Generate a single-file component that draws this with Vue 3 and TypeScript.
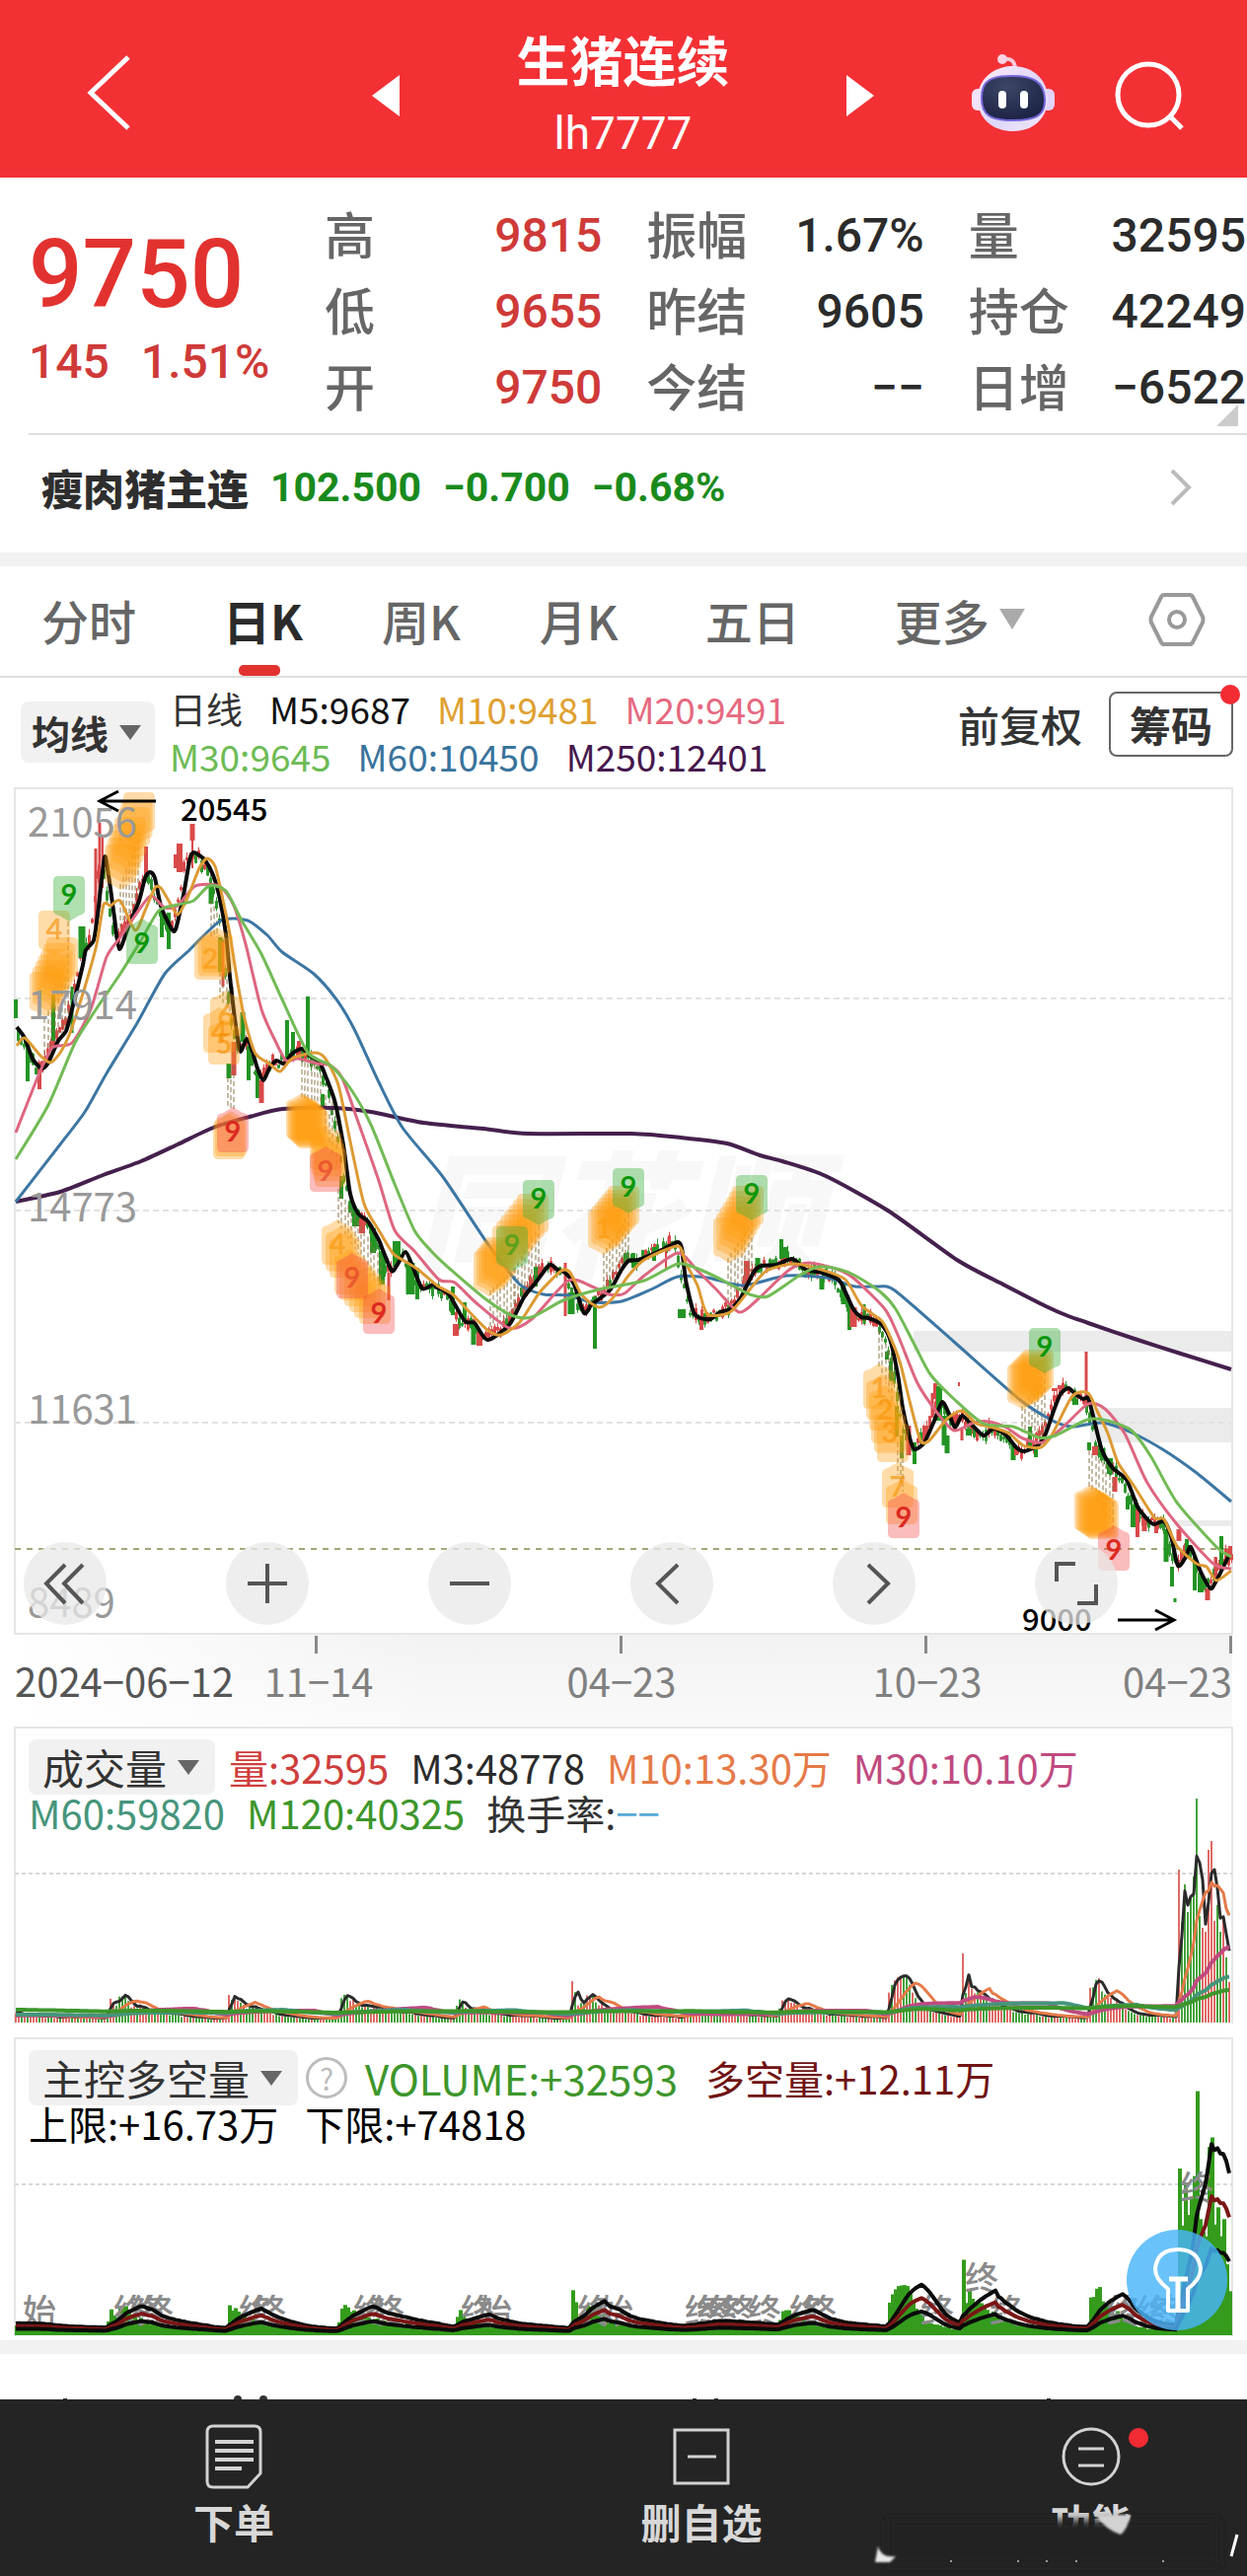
<script setup lang="ts">
import { ref } from 'vue'

type Pt = [number, number]

const quoteColumns = [
  [
    { label: '高', value: '9815', up: true },
    { label: '低', value: '9655', up: true },
    { label: '开', value: '9750', up: true },
  ],
  [
    { label: '振幅', value: '1.67%', up: false },
    { label: '昨结', value: '9605', up: false },
    { label: '今结', value: '−−', up: false },
  ],
  [
    { label: '量', value: '32595', up: false },
    { label: '持仓', value: '42249', up: false },
    { label: '日增', value: '−6522', up: false },
  ],
]

const tabs = ['分时', '日K', '周K', '月K', '五日', '更多']
const activeTab = ref('日K')

const maLegend = [
  [
    { text: '日线', color: '#333333' },
    { text: 'M5:9687', color: '#111111' },
    { text: 'M10:9481', color: '#e0a030' },
    { text: 'M20:9491', color: '#e5697f' },
  ],
  [
    { text: 'M30:9645', color: '#6dbb55' },
    { text: 'M60:10450', color: '#39739c' },
    { text: 'M250:12401', color: '#45184d' },
  ],
]

const volLegend = [
  [
    { text: '量:32595', color: '#cf3e3c' },
    { text: 'M3:48778', color: '#2b2b2b' },
    { text: 'M10:13.30万', color: '#e57a48' },
    { text: 'M30:10.10万', color: '#c04a80' },
  ],
  [
    { text: 'M60:59820', color: '#45957c' },
    { text: 'M120:40325', color: '#3d962b' },
  ],
]

// Smooth path through a list of points
function curve(nums: number[]): string {
  const p: Pt[] = []
  for (let i = 0; i < nums.length; i += 2) p.push([nums[i], nums[i + 1]])
  let d = `M${p[0][0]} ${p[0][1]}`
  for (let i = 0; i < p.length - 1; i++) {
    const a = p[Math.max(i - 1, 0)]
    const b = p[i]
    const c = p[i + 1]
    const e = p[Math.min(i + 2, p.length - 1)]
    const k = 0.12
    d += `C${(b[0] + (c[0] - a[0]) * k).toFixed(1)} ${(b[1] + (c[1] - a[1]) * k).toFixed(1)} ${(c[0] - (e[0] - b[0]) * k).toFixed(1)} ${(c[1] - (e[1] - b[1]) * k).toFixed(1)} ${c[0]} ${c[1]}`
  }
  return d
}

function at(nums: number[], x: number): number {
  if (x <= nums[0]) return nums[1]
  for (let i = 0; i < nums.length - 2; i += 2) {
    if (x <= nums[i + 2]) {
      const t = (x - nums[i]) / (nums[i + 2] - nums[i])
      return nums[i + 1] + (nums[i + 3] - nums[i + 1]) * t
    }
  }
  return nums[nums.length - 1]
}

function noise(i: number): number {
  const s = Math.sin(i * 12.9898 + 4.1) * 43758.5453
  return s - Math.floor(s)
}

const ma5 = [17,1041,25,1052,33,1073,42,1083,49,1077,59,1055,67,1045,73,1023,78,1003,84,978,87,963,95,953,99,927,106,869,110,887,116,930,121,962,131,937,141,913,147,890,152,884,157,890,163,918,173,940,178,942,186,907,192,873,196,864,202,867,208,872,216,887,222,907,229,947,233,990,238,1033,241,1053,244,1066,250,1053,255,1063,261,1083,267,1095,273,1083,280,1075,288,1078,296,1068,306,1063,314,1070,324,1077,331,1093,339,1115,343,1133,349,1167,355,1210,363,1230,373,1238,384,1257,388,1267,397,1288,402,1283,411,1269,418,1283,428,1306,439,1302,443,1305,455,1312,471,1339,481,1341,494,1358,516,1343,531,1315,543,1300,557,1282,565,1287,573,1290,582,1302,592,1331,600,1322,618,1308,630,1287,637,1278,647,1277,660,1272,673,1266,687,1259,691,1265,695,1297,703,1330,710,1336,720,1337,730,1330,740,1327,750,1317,757,1303,765,1288,772,1283,787,1282,803,1276,817,1287,833,1290,850,1297,858,1312,865,1327,873,1335,880,1336,893,1342,902,1357,910,1393,915,1427,922,1457,927,1469,937,1462,947,1440,955,1421,962,1433,968,1447,975,1435,983,1442,997,1455,1007,1448,1020,1455,1030,1467,1038,1471,1052,1465,1060,1453,1068,1430,1075,1413,1083,1407,1090,1413,1098,1418,1103,1417,1108,1435,1117,1470,1128,1488,1142,1500,1153,1527,1163,1540,1170,1545,1180,1542,1187,1557,1194,1587,1202,1578,1207,1568,1217,1593,1227,1610,1233,1602,1245,1578]
const ma10 = [17,1060,25,1052,41,1070,51,1077,61,1067,71,1047,80,1020,90,987,98,957,105,917,112,918,122,913,137,943,147,923,157,900,163,900,171,913,180,927,190,910,202,880,210,870,218,878,224,903,233,947,241,997,249,1037,259,1068,273,1078,284,1086,296,1073,318,1067,329,1072,343,1100,355,1157,369,1220,384,1247,398,1270,408,1277,424,1287,443,1303,459,1312,476,1330,494,1348,508,1353,527,1340,547,1310,569,1288,578,1290,590,1313,607,1325,620,1317,637,1293,653,1277,687,1263,695,1280,707,1303,717,1332,740,1330,760,1307,777,1288,805,1281,833,1287,857,1297,873,1323,893,1338,900,1350,912,1380,922,1420,933,1460,942,1460,960,1438,975,1430,990,1443,1007,1447,1023,1453,1037,1465,1055,1467,1067,1453,1087,1415,1103,1412,1112,1430,1123,1453,1133,1482,1150,1507,1170,1538,1180,1540,1193,1567,1213,1585,1223,1588,1233,1602,1248,1592]
const ma20 = [16,1148,39,1090,53,1062,73,1057,92,1023,108,970,122,950,139,925,153,908,167,920,180,918,198,898,222,898,237,918,249,957,265,1023,280,1057,290,1075,302,1073,322,1078,335,1080,347,1093,363,1137,384,1197,400,1247,420,1268,445,1297,461,1300,482,1320,516,1346,539,1337,576,1298,600,1304,617,1312,633,1311,653,1293,687,1270,707,1288,727,1308,749,1330,767,1318,800,1287,820,1280,850,1287,867,1297,897,1327,910,1353,930,1402,950,1432,967,1450,987,1442,1003,1441,1020,1447,1037,1458,1057,1462,1077,1447,1103,1423,1120,1428,1140,1453,1163,1503,1193,1545,1230,1585,1248,1590]
const ma30 = [16,1175,49,1120,76,1057,98,1022,122,987,143,953,161,923,180,917,196,913,212,898,229,903,245,933,265,967,286,1013,312,1067,335,1080,355,1103,376,1140,400,1200,420,1247,437,1268,457,1287,490,1315,518,1333,539,1335,571,1318,607,1307,653,1298,687,1281,710,1287,737,1300,760,1312,778,1314,810,1293,830,1284,852,1287,867,1293,893,1310,908,1327,927,1363,943,1393,967,1418,997,1443,1027,1446,1053,1457,1070,1455,1102,1439,1123,1440,1147,1450,1167,1477,1193,1523,1233,1568,1248,1578]
const ma60 = [16,1218,61,1160,86,1127,108,1088,139,1037,167,987,192,963,224,933,251,933,271,948,286,965,318,987,341,1013,359,1043,384,1097,408,1143,449,1193,496,1263,527,1302,551,1312,576,1313,600,1320,630,1319,660,1307,687,1294,717,1295,753,1303,797,1293,837,1295,867,1304,890,1304,907,1308,967,1360,1033,1418,1067,1440,1087,1446,1117,1442,1147,1452,1180,1470,1213,1493,1248,1522]
const ma250 = [16,1218,61,1208,102,1192,143,1177,180,1160,216,1143,253,1132,286,1124,339,1123,376,1127,429,1138,490,1144,535,1149,640,1149,690,1153,737,1159,770,1171,793,1177,837,1192,900,1227,970,1277,1017,1302,1060,1324,1083,1334,1103,1341,1150,1357,1200,1373,1248,1388]

const maLines = [
  { d: curve(ma250), color: '#45204d', w: 4 },
  { d: curve(ma60), color: '#3c76a3', w: 3 },
  { d: curve(ma5), color: '#0a0a0a', w: 4 },
  { d: curve(ma20), color: '#dd6680', w: 3 },
  { d: curve(ma10), color: '#dd9a33', w: 3 },
  { d: curve(ma30), color: '#72bb55', w: 3 },
]

interface Candle { x: number; y: number; h: number; wy: number; wh: number; up: boolean; w: number }
const candles: Candle[] = []
for (let x = 17, i = 0; x < 1248; x += 3, i++) {
  const now = at(ma5, x + 2)
  const next = at(ma5, x + 7)
  const up = noise(i) > 0.5 + (next - now) * 0.04
  const lead = (next - now) * 0.7
  const h = 2 + noise(i + 900) * 10
  const y = now + lead - h / 2 + (noise(i + 300) - 0.5) * 9
  const ext = noise(i + 500) * 6
  candles.push({ x, y, h, wy: y - ext, wh: h + ext * 1.7, up, w: 3 })
}
// Bars with an outstanding range: x, top, bottom, rising, width
const strong: [number, number, number, number, number][] = [
  [16,1013,1032,0,4],[28,1060,1096,0,4],[40,1085,1104,1,4],[54,1008,1055,0,4],[73,1000,1047,0,3],[83,939,971,0,7],
  [97,860,940,1,3],[101,834,920,1,3],[104,848,900,1,2],[148,858,888,1,4],[164,920,950,0,4],[171,925,962,0,4],
  [182,855,884,1,6],[178,866,880,1,4],[195,835,852,1,5],[195,852,880,1,2],[214,895,916,0,5],[223,950,985,0,4],[226,955,1000,1,3],
  [232,1078,1093,0,5],[237,1056,1090,1,5],[246,1026,1056,0,5],[252,1060,1095,0,4],[261,1085,1113,0,4],[265,1095,1118,1,5],
  [291,1034,1073,0,4],[297,1046,1070,0,4],[303,1055,1070,1,4],[312,1010,1070,0,4],[327,1109,1122,0,4],[346,1192,1215,0,4],
  [361,1230,1243,0,8],[367,1235,1250,1,6],[378,1245,1270,0,6],[387,1268,1302,0,6],[394,1290,1318,1,3],[402,1258,1280,0,8],
  [416,1280,1312,0,9],[423,1285,1317,0,4],[459,1304,1333,0,4],[462,1342,1354,1,6],[471,1320,1340,0,4],[480,1340,1363,0,5],[486,1350,1364,1,6],
  [543,1284,1304,0,4],[573,1280,1334,1,3],[579,1310,1332,0,7],[603,1314,1367,0,4],[642,1270,1285,0,4],[663,1264,1278,0,4],
  [675,1268,1286,1,2],[678,1254,1268,1,3],[691,1327,1336,0,8],[711,1334,1348,1,4],[757,1278,1300,1,6],[768,1275,1290,0,5],
  [792,1256,1276,0,4],[796,1264,1275,0,6],[833,1294,1307,0,5],[855,1300,1322,0,5],[861,1322,1348,0,4],[865,1325,1345,1,7],[876,1322,1342,0,3],
  [899,1370,1378,0,4],[903,1380,1400,0,4],[909,1425,1456,0,4],[914,1455,1478,0,4],[921,1445,1475,1,5],[927,1462,1484,0,4],
  [937,1445,1460,1,4],[945,1412,1437,1,3],[948,1402,1418,1,4],[952,1405,1440,0,6],[957,1435,1465,0,5],[960,1455,1473,0,5],
  [972,1401,1405,1,2],[975,1447,1460,1,3],[982,1448,1455,0,6],[1027,1465,1480,0,5],[1030,1466,1475,1,4],[1044,1446,1470,0,4],[1050,1465,1477,0,4],
  [1069,1407,1410,1,6],[1075,1404,1408,1,6],[1090,1418,1424,0,6],[1101,1370,1425,1,3],[1104,1462,1470,0,4],[1110,1466,1475,1,6],[1117,1468,1477,0,7],
  [1125,1478,1494,0,6],[1130,1497,1512,1,5],[1143,1517,1530,0,4],[1149,1525,1548,0,6],[1153,1530,1558,1,4],[1160,1540,1552,1,5],[1172,1545,1554,1,4],
  [1182,1550,1583,0,5],[1188,1588,1608,0,4],[1195,1550,1562,1,5],[1191,1620,1624,0,3],[1203,1560,1572,0,4],[1211,1580,1612,0,4],[1217,1598,1614,0,6],
  [1224,1610,1622,1,5],[1232,1578,1600,1,3],[1238,1557,1586,0,4],[1243,1570,1585,1,4],[1247,1567,1577,1,4],
]

interface Tag { x: number; y: number; text: string; kind: string; tip: string }
const tags: Tag[] = []
// A run of stacked count tags; stacked tags hide their digits, so only readable ones are passed
function cluster(x1: number, y1: number, x2: number, y2: number, n: number, tip: string, digits = '') {
  for (let i = 0; i < n; i++) {
    const t = n > 1 ? i / (n - 1) : 0
    tags.push({ x: x1 + (x2 - x1) * t, y: y1 + (y2 - y1) * t, text: digits[i] ?? '', kind: 'mid', tip })
  }
}
cluster(46, 1005, 63, 970, 7, 'down')
cluster(55, 943, 55, 943, 1, 'down', '4')
cluster(122, 876, 132, 848, 5, 'down')
cluster(136, 838, 141, 823, 3, 'down')
cluster(213, 973, 220, 966, 3, 'up', '2')
cluster(229, 1030, 222, 1047, 2, 'up', '64')
cluster(227, 1059, 227, 1059, 1, 'up', '5')
cluster(232, 1155, 234, 1152, 2, 'up')
cluster(306, 1134, 317, 1144, 7, 'up')
cluster(330, 1166, 335, 1183, 4, 'up')
cluster(342, 1262, 350, 1275, 3, 'up', '4')
cluster(355, 1292, 380, 1322, 6, 'up')
cluster(496, 1288, 507, 1274, 5, 'down')
cluster(515, 1262, 540, 1230, 7, 'down')
cluster(612, 1246, 632, 1222, 7, 'down', '1')
cluster(739, 1254, 758, 1222, 7, 'down')
cluster(891, 1408, 897, 1430, 3, 'up', '1 2')
cluster(899, 1443, 905, 1462, 3, 'up', ' 3')
cluster(910, 1508, 914, 1525, 2, 'up', '7')
cluster(1037, 1403, 1052, 1388, 7, 'down')
cluster(1105, 1531, 1118, 1540, 7, 'up')
const nines: Tag[] = [
  { x: 70, y: 908, text: '9', kind: 'green', tip: 'down' },
  { x: 144, y: 957, text: '9', kind: 'green', tip: 'up' },
  { x: 546, y: 1216, text: '9', kind: 'green', tip: 'down' },
  { x: 519, y: 1263, text: '9', kind: 'green faint', tip: 'down' },
  { x: 637, y: 1204, text: '9', kind: 'green', tip: 'down' },
  { x: 762, y: 1211, text: '9', kind: 'green', tip: 'down' },
  { x: 1059, y: 1366, text: '9', kind: 'green', tip: 'down' },
  { x: 236, y: 1148, text: '9', kind: 'red', tip: 'up' },
  { x: 330, y: 1188, text: '9', kind: 'red faint', tip: 'up' },
  { x: 357, y: 1296, text: '9', kind: 'red faint', tip: 'up' },
  { x: 384, y: 1332, text: '9', kind: 'red', tip: 'up' },
  { x: 916, y: 1539, text: '9', kind: 'red', tip: 'up' },
  { x: 1129, y: 1572, text: '9', kind: 'red', tip: 'up' },
]
tags.push(...nines)

function tagPath(t: Tag): string {
  const l = t.x - 16
  const r = t.x + 16
  const a = t.y - 20
  const b = t.y + 20
  if (t.tip === 'down')
    return `M${l + 5} ${a}H${r - 5}Q${r} ${a} ${r} ${a + 5}V${b - 5}Q${r} ${b - 1} ${r - 6} ${b}L${t.x} ${b + 6}L${l + 6} ${b}Q${l} ${b - 1} ${l} ${b - 5}V${a + 5}Q${l} ${a} ${l + 5} ${a}Z`
  return `M${l + 5} ${b}H${r - 5}Q${r} ${b} ${r} ${b - 5}V${a + 5}Q${r} ${a + 1} ${r - 6} ${a}L${t.x} ${a - 6}L${l + 6} ${a}Q${l} ${a + 1} ${l} ${a + 5}V${b - 5}Q${l} ${b} ${l + 5} ${b}Z`
}

// Leader lines between tags and candles: x1, x2, count, top1, bottom1, top2, bottom2
const leaderSets = [
  [69, 69, 1, 934, 1045, 934, 1045], [45, 66, 7, 1032, 1072, 990, 1045], [122, 140, 7, 896, 940, 850, 915],
  [214, 220, 3, 912, 950, 925, 950], [223, 236, 5, 985, 1012, 1000, 1030], [231, 237, 3, 1092, 1124, 1080, 1124],
  [306, 325, 7, 1076, 1112, 1080, 1125], [330, 341, 4, 1110, 1150, 1120, 1180], [343, 386, 14, 1205, 1240, 1275, 1308],
  [497, 521, 8, 1308, 1345, 1285, 1335], [522, 546, 8, 1285, 1330, 1242, 1290], [612, 637, 9, 1270, 1312, 1230, 1275],
  [738, 762, 8, 1275, 1325, 1238, 1290], [891, 904, 5, 1348, 1385, 1375, 1420], [910, 915, 3, 1462, 1495, 1470, 1512],
  [1036, 1059, 8, 1425, 1452, 1390, 1455], [1104, 1128, 8, 1470, 1508, 1490, 1550],
]
const leaders = leaderSets.flatMap(([x1, x2, n, t1, b1, t2, b2]) =>
  Array.from({ length: n }, (_, i) => {
    const k = n > 1 ? i / (n - 1) : 0
    return { x: Math.round(x1 + (x2 - x1) * k), a: t1 + (t2 - t1) * k, b: b1 + (b2 - b1) * k }
  }),
)

// Volume heights along the time axis
const volKeys = [15,9,40,6,100,4,107,3,109,24,118,20,123,34,127,22,140,15,160,10,200,5,228,3,231,31,237,28,245,18,265,12,300,5,341,3,344,32,352,25,370,16,400,12,430,7,460,4,463,29,468,18,490,10,560,4,576,4,579,47,583,22,590,20,597,35,602,28,612,14,650,8,690,5,700,11,780,6,787,4,790,24,800,24,812,14,850,7,897,5,900,38,918,46,925,25,940,12,972,5,975,69,978,40,990,33,1000,24,1020,14,1060,6,1101,4,1104,38,1110,52,1116,30,1135,18,1155,8,1190,5]
const surge = [155, 102, 140, 112, 128, 148, 227, 108, 96, 92, 175, 184, 103, 119, 92, 108, 66, 41, 25]
interface Bar { x: number; h: number; up: boolean }
const bars: Bar[] = []
for (let x = 15, i = 0; x < 1247; x += 3, i++) {
  const s = Math.floor((x - 1194) / 3)
  const h = s >= 0 ? surge[Math.min(s, surge.length - 1)] : at(volKeys, x) * (0.75 + noise(i + 40) * 0.35)
  const up = s >= 0 ? [0, 8, 9, 10, 11, 12, 15, 17, 18].includes(s) : noise(i + 77) > 0.5
  bars.push({ x, h, up })
}
function average(n: number, seed: number): number[] {
  return bars.map((_, i) => {
    let sum = 0
    for (let j = 0; j < n; j++) sum += i - j >= 0 ? bars[i - j].h : seed
    return sum / n
  })
}
function trace(values: number[], base: number, k = 1): string {
  return values.map((v, i) => `${i ? 'L' : 'M'}${bars[i].x + 1} ${(base - v * k).toFixed(1)}`).join('')
}
const volLines = [
  { d: trace(average(3, 8), 2049), color: '#2b2b2b', w: 3 },
  { d: trace(average(10, 6), 2049), color: '#e57a48', w: 3 },
  { d: trace(average(30, 6), 2049), color: '#c04a80', w: 4 },
  { d: trace(average(60, 7), 2049), color: '#45957c', w: 4 },
  { d: trace(average(120, 12), 2049), color: '#3d962b', w: 4 },
]
const mid = average(12, 7)
const forceLines = [
  { d: trace(mid, 2365, 1.38), color: '#0a0a0a' },
  { d: trace(mid, 2365, 1), color: '#7a1616' },
  { d: trace(mid, 2365, 0.62), color: '#0a0a0a' },
]
const notes: { x: number; y: number; text: string }[] = [
  { x: 23, y: 2355, text: '始' }, { x: 485, y: 2355, text: '始' }, { x: 608, y: 2355, text: '始' },
  { x: 978, y: 2322, text: '终' }, { x: 1196, y: 2230, text: '终' },
  ...[115, 132, 142, 242, 256, 358, 376, 467, 585, 694, 706, 718, 732, 758, 800, 814, 933, 1003, 1122, 1152, 1165].map((x) => ({ x, y: 2355, text: '终' })),
]

const ticks = [321, 630, 939, 1248]
</script>

<template>
  <div class="page">
    <header class="top">
      <button class="plain back" aria-label="返回">
        <svg width="46" height="78" viewBox="0 0 46 78"><path d="M42 3 4 39l38 36" fill="none" stroke="#fff" stroke-width="5" /></svg>
      </button>
      <button class="plain" aria-label="上一个"><svg width="28" height="42" viewBox="0 0 28 42"><path d="M28 0v42L0 21z" fill="#fff" /></svg></button>
      <div class="title">
        <h1>生猪连续</h1>
        <p>lh7777</p>
      </div>
      <button class="plain" aria-label="下一个"><svg width="28" height="42" viewBox="0 0 28 42"><path d="M0 0v42l28-21z" fill="#fff" /></svg></button>
      <div class="tools">
        <button class="plain" aria-label="智能助手">
          <svg width="86" height="80" viewBox="0 0 86 80">
            <defs>
              <linearGradient id="shell" x1="0" y1="0" x2="1" y2="1"><stop offset="0" stop-color="#fdeaf6" /><stop offset=".55" stop-color="#ded8fb" /><stop offset="1" stop-color="#f3e6fa" /></linearGradient>
              <radialGradient id="visor" cx=".4" cy=".25" r=".8"><stop offset="0" stop-color="#3d4665" /><stop offset="1" stop-color="#1a2144" /></radialGradient>
            </defs>
            <path d="M33 6q11-2 12 9" fill="none" stroke="#f9c9dd" stroke-width="4" />
            <circle cx="32" cy="6" r="5" fill="#fbd3e4" />
            <rect x="1" y="36" width="14" height="22" rx="6" fill="#f3e3fb" />
            <rect x="71" y="36" width="14" height="22" rx="6" fill="#e3d2fa" />
            <path d="M43 13C63 13 78 27 78 46S64 79 43 79 7 66 7 46 23 13 43 13Z" fill="url(#shell)" />
            <path d="M42 23C64 23 74 29 75 46S66 68 43 68 11 63 11 45 21 23 42 23Z" fill="url(#visor)" stroke="#7566d9" stroke-width="2" />
            <rect x="28" y="38" width="8" height="18" rx="4" fill="#fff" />
            <rect x="50" y="38" width="8" height="18" rx="4" fill="#fff" />
          </svg>
        </button>
        <button class="plain" aria-label="搜索">
          <svg width="72" height="72" viewBox="0 0 72 72" fill="none" stroke="#fff" stroke-width="5"><circle cx="34" cy="35" r="31" /><path d="m56 57 12 12" /></svg>
        </button>
      </div>
    </header>

    <section class="quote">
      <div class="price">
        <strong>9750</strong>
        <p><span>145</span><span>1.51%</span></p>
      </div>
      <dl v-for="(col, i) in quoteColumns" :key="i">
        <div v-for="c in col" :key="c.label">
          <dt>{{ c.label }}</dt>
          <dd :class="{ up: c.up }">{{ c.value }}</dd>
        </div>
      </dl>
      <i class="corner"></i>
    </section>

    <a class="linked" href="#related">
      <b>瘦肉猪主连</b>
      <span>102.500</span><span>−0.700</span><span>−0.68%</span>
      <svg width="22" height="38" viewBox="0 0 22 38"><path d="m2 2 17 17L2 36" fill="none" stroke="#bbb" stroke-width="4" /></svg>
    </a>

    <nav class="tabs">
      <button v-for="t in tabs" :key="t" class="plain tab" :class="{ active: activeTab === t, wide: !t.includes('K') }" @click="activeTab = t">
        {{ t }}<i v-if="t === '更多'" class="tri pale"></i>
      </button>
      <button class="plain gear" aria-label="设置">
        <svg width="58" height="54" viewBox="0 0 58 54" fill="none" stroke="#999" stroke-width="4"><path d="M16 2h26q2 0 3 2l10 20q1 3 0 6L45 50q-1 2-3 2H16q-2 0-3-2L3 30q-1-3 0-6L13 4q1-2 3-2Z" /><circle cx="29" cy="27" r="8" /></svg>
      </button>
    </nav>

    <section class="ma">
      <label class="picker bold"><select aria-label="主图指标"><option>均线</option></select><i class="tri"></i></label>
      <div class="legend">
        <p v-for="(row, i) in maLegend" :key="i"><span v-for="m in row" :key="m.text" :style="{ color: m.color }">{{ m.text }}</span></p>
      </div>
      <button class="plain adjust">前复权</button>
      <button class="chips">筹码<i class="dot"></i></button>
    </section>

    <section class="chart">
      <svg class="plot" viewBox="0 798 1264 952">
        <defs><linearGradient id="haze" x1="0" y1="0" x2="0" y2="1"><stop offset="0" stop-color="#f2f2f2" /><stop offset="1" stop-color="#fafafa" /></linearGradient>
          <linearGradient id="fade" x1="0" y1="0" x2="1" y2="0"><stop offset="0" stop-color="#fff" /><stop offset=".35" stop-color="#fff" stop-opacity="0" /></linearGradient></defs>
        <rect x="15" y="1657" width="1234" height="93" fill="url(#haze)" />
        <rect x="15" y="1657" width="1234" height="93" fill="url(#fade)" />
        <text x="418" y="1284" class="mark">同花顺</text>
        <g fill="#ebebeb">
          <rect x="926" y="1349" width="323" height="21" />
          <rect x="1105" y="1427" width="144" height="35" />
          <rect x="1192" y="1541" width="57" height="6" />
        </g>
        <path d="M15 1012H1249M15 1227H1249M15 1442H1249" stroke="#e2e2e2" stroke-width="2" stroke-dasharray="6 4" />
        <rect x="15" y="799" width="1234" height="857" fill="none" stroke="#e6e6e6" stroke-width="2" />
        <path d="M15 1570H1249" stroke="#a6a678" stroke-width="2" stroke-dasharray="6 6" />
        <g v-for="(c, i) in candles" :key="i" :fill="c.up ? '#d94a4a' : '#2f962f'">
          <rect :x="c.x" :y="c.y" :width="c.w" :height="c.h" />
          <rect :x="c.x + 1" :y="c.wy" width="1" :height="c.wh" />
        </g>
        <rect v-for="(s, i) in strong" :key="'s' + i" :x="s[0] - s[4] / 2" :y="s[1]" :width="s[4]" :height="s[2] - s[1]" :fill="s[3] ? '#d94a4a' : '#239423'" />
        <path v-for="(l, i) in leaders" :key="'l' + i" :d="`M${l.x} ${l.a}V${l.b}`" stroke="#8a7648" stroke-width="1" stroke-dasharray="5 3" />
        <path v-for="l in maLines" :key="l.color" :d="l.d" fill="none" :stroke="l.color" :stroke-width="l.w" stroke-linejoin="round" />
        <g v-for="(t, i) in tags" :key="'t' + i" class="tag" :class="t.kind">
          <path :d="tagPath(t)" />
          <text v-if="t.text.trim()" :x="t.x" :y="t.y + 9">{{ t.text }}</text>
        </g>
        <g class="axis">
          <text x="28" y="848">21056</text>
          <text x="28" y="1033">17914</text>
          <text x="28" y="1238">14773</text>
          <text x="28" y="1443">11631</text>
          <text x="28" y="1639">8489</text>
        </g>
        <g fill="none" stroke="#000" stroke-width="3"><path d="M158 812H101M120 802 101 812l19 10M1133 1642h57M1171 1632l19 10-19 10" /></g>
        <text x="183" y="832" class="peak">20545</text>
        <text x="1036" y="1653" class="peak">9000</text>
        <rect v-for="t in ticks" :key="t" :x="t - 2" y="1658" width="3" height="18" fill="#888" />
        <g class="dates">
          <text x="15" y="1720" class="dark">2024−06−12</text>
          <text x="323" y="1720" text-anchor="middle">11−14</text>
          <text x="630" y="1720" text-anchor="middle">04−23</text>
          <text x="940" y="1720" text-anchor="middle">10−23</text>
          <text x="1249" y="1720" text-anchor="end">04−23</text>
        </g>
      </svg>
      <div class="controls">
        <button aria-label="最早"><svg viewBox="0 0 84 84"><path d="M42 23 23 42l19 20M60 23 41 42l19 20" /></svg></button>
        <button aria-label="放大"><svg viewBox="0 0 84 84"><path d="M22 42h40M42 22v40" /></svg></button>
        <button aria-label="缩小"><svg viewBox="0 0 84 84"><path d="M22 42h40" /></svg></button>
        <button aria-label="左移"><svg viewBox="0 0 84 84"><path d="M48 23 28 42l20 20" /></svg></button>
        <button aria-label="右移"><svg viewBox="0 0 84 84"><path d="m36 23 20 19-20 20" /></svg></button>
        <button aria-label="全屏"><svg viewBox="0 0 84 84"><path d="M22 40V22h19M62 43v19H43" /></svg></button>
      </div>
    </section>

    <section class="panel">
      <svg class="plot" viewBox="0 1750 1264 315">
        <path d="M15 2051V1751H1249V2051" fill="none" stroke="#e6e6e6" stroke-width="2" />
        <path d="M15 1899H1249" stroke="#d8d8d8" stroke-width="2" stroke-dasharray="4 3" />
        <rect v-for="b in bars" :key="b.x" :x="b.x" :y="2050 - b.h" width="2" :height="b.h" :fill="b.up ? '#e06a66' : '#43a33b'" />
        <path v-for="l in volLines" :key="l.color" :d="l.d" fill="none" :stroke="l.color" :stroke-width="l.w" stroke-linejoin="round" />
      </svg>
      <div class="head">
        <div class="line">
          <label class="picker"><select aria-label="副图指标一"><option>成交量</option></select><i class="tri"></i></label>
          <span v-for="m in volLegend[0]" :key="m.text" :style="{ color: m.color }">{{ m.text }}</span>
        </div>
        <p class="line low">
          <span v-for="m in volLegend[1]" :key="m.text" :style="{ color: m.color }">{{ m.text }}</span>
          <span>换手率:<em>−−</em></span>
        </p>
      </div>
    </section>

    <section class="panel">
      <svg class="plot" viewBox="0 2065 1264 307">
        <path d="M15 2368V2066H1249V2368" fill="none" stroke="#e6e6e6" stroke-width="2" />
        <path d="M15 2214H1249" stroke="#d8d8d8" stroke-width="2" stroke-dasharray="4 3" />
        <rect v-for="b in bars" :key="b.x" :x="b.x" :y="2367 - b.h * 1.09" width="4" :height="b.h * 1.09" fill="#349b1c" />
        <text v-for="(n, i) in notes" :key="i" :x="n.x" :y="n.y" class="note">{{ n.text }}</text>
        <path v-for="(l, i) in forceLines" :key="'f' + i" :d="l.d" fill="none" :stroke="l.color" stroke-width="4" stroke-linejoin="round" />
      </svg>
      <div class="head">
        <div class="line">
          <label class="picker"><select aria-label="副图指标二"><option>主控多空量</option></select><i class="tri"></i></label>
          <button class="plain help" aria-label="指标说明">?</button>
          <span class="force">VOLUME:+32593</span>
          <span class="brown">多空量:+12.11万</span>
        </div>
        <p class="line low black"><span>上限:+16.73万</span><span>下限:+74818</span></p>
      </div>
      <button class="bulb" aria-label="提示">
        <svg width="102" height="102" viewBox="0 0 102 102" fill="none" stroke="#fff" stroke-width="4" stroke-linejoin="round">
          <path d="M42 66V60Q29 50 29 40Q31 20 52 20T75 40Q75 50 62 60V66" /><path d="M43 50H62M52 50V80" stroke-width="5" /><path d="M42 64V82H62V64" />
        </svg>
      </button>
    </section>

    <div class="peek">
      <svg viewBox="0 0 1264 46"><g fill="#333"><circle cx="241" cy="46" r="4" /><circle cx="267" cy="46" r="4" /><path d="M64 45h4v1h-4zM702 45h4v1h-4zM724 45h4v1h-4zM1061 45h4v1h-4z" /></g></svg>
    </div>

    <footer class="bottom">
      <button class="plain">
        <svg width="60" height="68" viewBox="0 0 60 68" fill="none" stroke="#d2d2d2"><path d="M9 3H51Q57 3 57 9V51L44 65H9Q3 65 3 59V9Q3 3 9 3Z" stroke-width="3" /><path d="M11 19H50M11 28H50M11 37H50M11 46H38" stroke-width="4" /></svg>
        <span>下单</span>
      </button>
      <button class="plain">
        <svg width="60" height="68" viewBox="0 0 60 68" fill="none" stroke="#d2d2d2" stroke-width="3"><path d="M3 7H57V61H3ZM16 34H45" /></svg>
        <span>删自选</span>
      </button>
      <button class="plain">
        <svg width="60" height="68" viewBox="0 0 60 68" fill="none" stroke="#d2d2d2" stroke-width="3"><circle cx="30" cy="34" r="28" /><path d="M17 26H43M17 43H43" /></svg>
        <span>功能</span>
        <i class="dot"></i>
      </button>
      <div class="smudge">
        <svg viewBox="0 0 380 72">
          <defs><filter id="soft" x="-10%" y="-40%" width="120%" height="180%"><feGaussianBlur stdDeviation="4" /></filter><filter id="tiny"><feGaussianBlur stdDeviation="1" /></filter></defs>
          <rect x="15" y="15" width="336" height="46" fill="#222" filter="url(#soft)" />
          <path d="M226 10l36 0q-3 14-10 20-14-4-26-20z" fill="#d2d2d2" filter="url(#tiny)" />
          <path d="M6 42q3 12 18 10l-6 6H3z" fill="#e8e8e8" filter="url(#tiny)" />
          <path d="M370 30 364 52" stroke="#fff" stroke-width="3" />
          <path d="M79 56h2v2h-2zM147 56h2v2h-2zM176 56h2v2h-2zM206 56h2v2h-2zM294 56h2v2h-2z" fill="#999" />
        </svg>
      </div>
    </footer>
  </div>
</template>

<style>
body { margin: 0; background: #fff; }
</style>

<style scoped>
.page { font-family: "Noto Sans CJK SC", "Noto Sans", sans-serif; color: #333; background: #fff; overflow: hidden; }
.page * { box-sizing: border-box; }
p, h1, dl, dd { margin: 0; }
button, select { font-family: inherit; color: inherit; }
.plain { border: 0; background: none; padding: 0; display: inline-flex; align-items: center; }
svg { display: block; }

.top { height: 180px; padding: 14px 62px 0 88px; background: #f33135; color: #fff; display: grid; grid-template-columns: 289px 28px 1fr 28px 98px auto; align-items: center; }
.back { justify-self: start; padding-bottom: 6px; }
.title { text-align: center; }
.title h1 { font-size: 54px; line-height: 76px; font-weight: 700; }
.title p { font-family: Roboto, sans-serif; font-size: 46px; line-height: 74px; }
.tools { grid-column: 6; display: flex; align-items: center; gap: 60px; }
.tools button:first-child { padding-bottom: 6px; }

.quote { position: relative; height: 261px; padding: 20px 1px 0 0; display: flex; gap: 45px; }
.quote::after { content: ""; position: absolute; left: 29px; right: 0; bottom: 0; height: 2px; background: #dedede; }
.price { width: 284px; padding-left: 29px; color: #e2322f; white-space: nowrap; font-family: Roboto, sans-serif; }
.price strong { display: block; font-size: 96px; line-height: 112px; font-weight: 500; margin-top: 22px; }
.price p { display: flex; gap: 32px; font-size: 48px; line-height: 66px; font-weight: 500; color: #cf3a38; }
.quote dl { flex: 1; }
.quote dl div { display: flex; justify-content: space-between; height: 77px; line-height: 77px; white-space: nowrap; font-weight: 500; }
dt { font-size: 51px; color: #666; margin-top: -2px; }
dd { font-family: Roboto, sans-serif; font-size: 48px; color: #2b2b2b; }
dd.up { color: #cf3a38; }
.corner { position: absolute; right: 9px; bottom: 9px; border: 11px solid; border-color: transparent #ccc #ccc transparent; }

.linked { height: 133px; padding: 0 56px 14px 42px; border-bottom: 14px solid #f2f2f2; display: flex; align-items: center; text-decoration: none; font-family: Roboto, "Noto Sans CJK SC", sans-serif; font-size: 41px; font-weight: 700; color: #198a1c; gap: 22px; white-space: nowrap; }
.linked b { color: #2e2e2e; font-size: 42px; }
.linked svg { margin-left: auto; }

.tabs { height: 113px; padding: 0 42px 4px 34px; border-bottom: 2px solid #dedede; display: flex; gap: 80px; }
.tab { position: relative; font-size: 48px; font-weight: 500; color: #666; white-space: nowrap; }
.tab.wide { padding: 0 8px; }
.tab.active { color: #2b2b2b; font-weight: 700; }
.tab.active::after { content: ""; position: absolute; left: 16px; bottom: -4px; width: 42px; height: 11px; border-radius: 5px; background: #e2322f; }
.gear { margin-left: auto; }
.tri { width: 0; height: 0; border: 11px solid transparent; border-top: 15px solid #666; border-bottom: 0; flex: none; }
.tri.pale { border-width: 21px 13px 0; border-top-color: #aaa; margin-left: 10px; }

.ma { height: 111px; padding: 12px 14px 0 21px; display: flex; align-items: flex-start; }
.picker { display: flex; align-items: center; gap: 10px; height: 56px; padding: 0 16px 0 14px; background: #f1f1f1; border-radius: 8px; }
.picker select { appearance: none; border: 0; padding: 0; background: none; font-size: 42px; line-height: 56px; color: #333; }
.picker.bold { height: 62px; margin-top: 12px; padding: 0 14px 0 11px; }
.picker.bold select { font-size: 39px; font-weight: 700; }
.legend { margin: -5px 0 0 15px; }
.legend p { display: flex; gap: 27px; font-size: 37px; line-height: 48px; height: 48px; white-space: nowrap; }
.adjust { margin: 4px 27px 0 auto; font-size: 42px; line-height: 62px; font-weight: 500; }
.chips { position: relative; height: 66px; margin-top: 2px; padding: 0 19px; border: 2px solid #666; border-radius: 8px; background: #fff; font-size: 42px; line-height: 58px; font-weight: 700; }
.chips .dot { position: absolute; right: -9px; top: -9px; }
.dot { width: 20px; height: 20px; border-radius: 50%; background: #f32b33; }

.chart, .panel { position: relative; }
.plot { width: 100%; height: auto; }
.mark { font-size: 138px; font-weight: 900; font-style: italic; fill: #f8f8f8; }
.axis { font-size: 40px; fill: #999; }
.dates { font-size: 40px; fill: #808080; }
.dates .dark { fill: #555; }
.peak { font-size: 31px; font-weight: 500; fill: #000; }
.tag text { font-size: 29px; font-weight: 700; text-anchor: middle; font-family: Lato, sans-serif; }
.tag.mid path { fill: #ff9f10; fill-opacity: 0.36; }
.tag.mid text { fill: #f08c00; fill-opacity: 0.6; }
.tag.green path { fill: #3aae3a; fill-opacity: 0.4; }
.tag.green text { fill: #0b960b; }
.tag.red path { fill: #f04444; fill-opacity: 0.36; }
.tag.red text { fill: #dc2a20; }
.tag.faint text { fill-opacity: 0.5; }
.controls { position: absolute; left: 24px; right: 131px; bottom: 103px; display: flex; justify-content: space-between; }
.controls button { width: 84px; height: 84px; border: 0; padding: 0; border-radius: 50%; background: rgba(232, 232, 232, 0.75); }
.controls path { fill: none; stroke: #555; stroke-width: 4; }

.head { position: absolute; left: 29px; top: 13px; }
.line { display: flex; align-items: center; height: 56px; font-size: 40px; line-height: 52px; white-space: nowrap; gap: 22px; }
.line .picker { margin-right: -8px; }
.line.low { height: 36px; gap: 22px; line-height: 36px; }
.line.low.black { gap: 27px; }
.line em { font-style: normal; color: #55a9d8; }
.line .help { width: 42px; height: 42px; border: 3px solid #bdbdbd; border-radius: 50%; justify-content: center; font-size: 30px; color: #bdbdbd; margin-left: -6px; }
.force { color: #3d962b; font-size: 42px; margin-left: -4px; }
.brown { color: #701313; margin-left: 6px; }
.black { color: #000; }
.note { font-size: 34px; fill: #8a8a8a; font-weight: 500; }
.bulb { position: absolute; right: 20px; bottom: 10px; width: 102px; height: 102px; padding: 0; border: 0; border-radius: 50%; background: rgba(73, 180, 250, 0.82); }

.peek { border-top: 14px solid #f2f2f2; }
.peek svg { width: 100%; height: auto; }

.bottom { position: relative; height: 179px; background: #242424; color: #d8d8d8; display: grid; grid-template-columns: 3fr 3fr 2fr; }
.bottom button { position: relative; flex-direction: column; padding-top: 24px; font-size: 41px; font-weight: 700; line-height: 62px; }
.bottom .dot { position: absolute; left: 62%; top: 29px; }
.smudge { position: absolute; right: 0; bottom: 0; width: 380px; pointer-events: none; }
</style>
